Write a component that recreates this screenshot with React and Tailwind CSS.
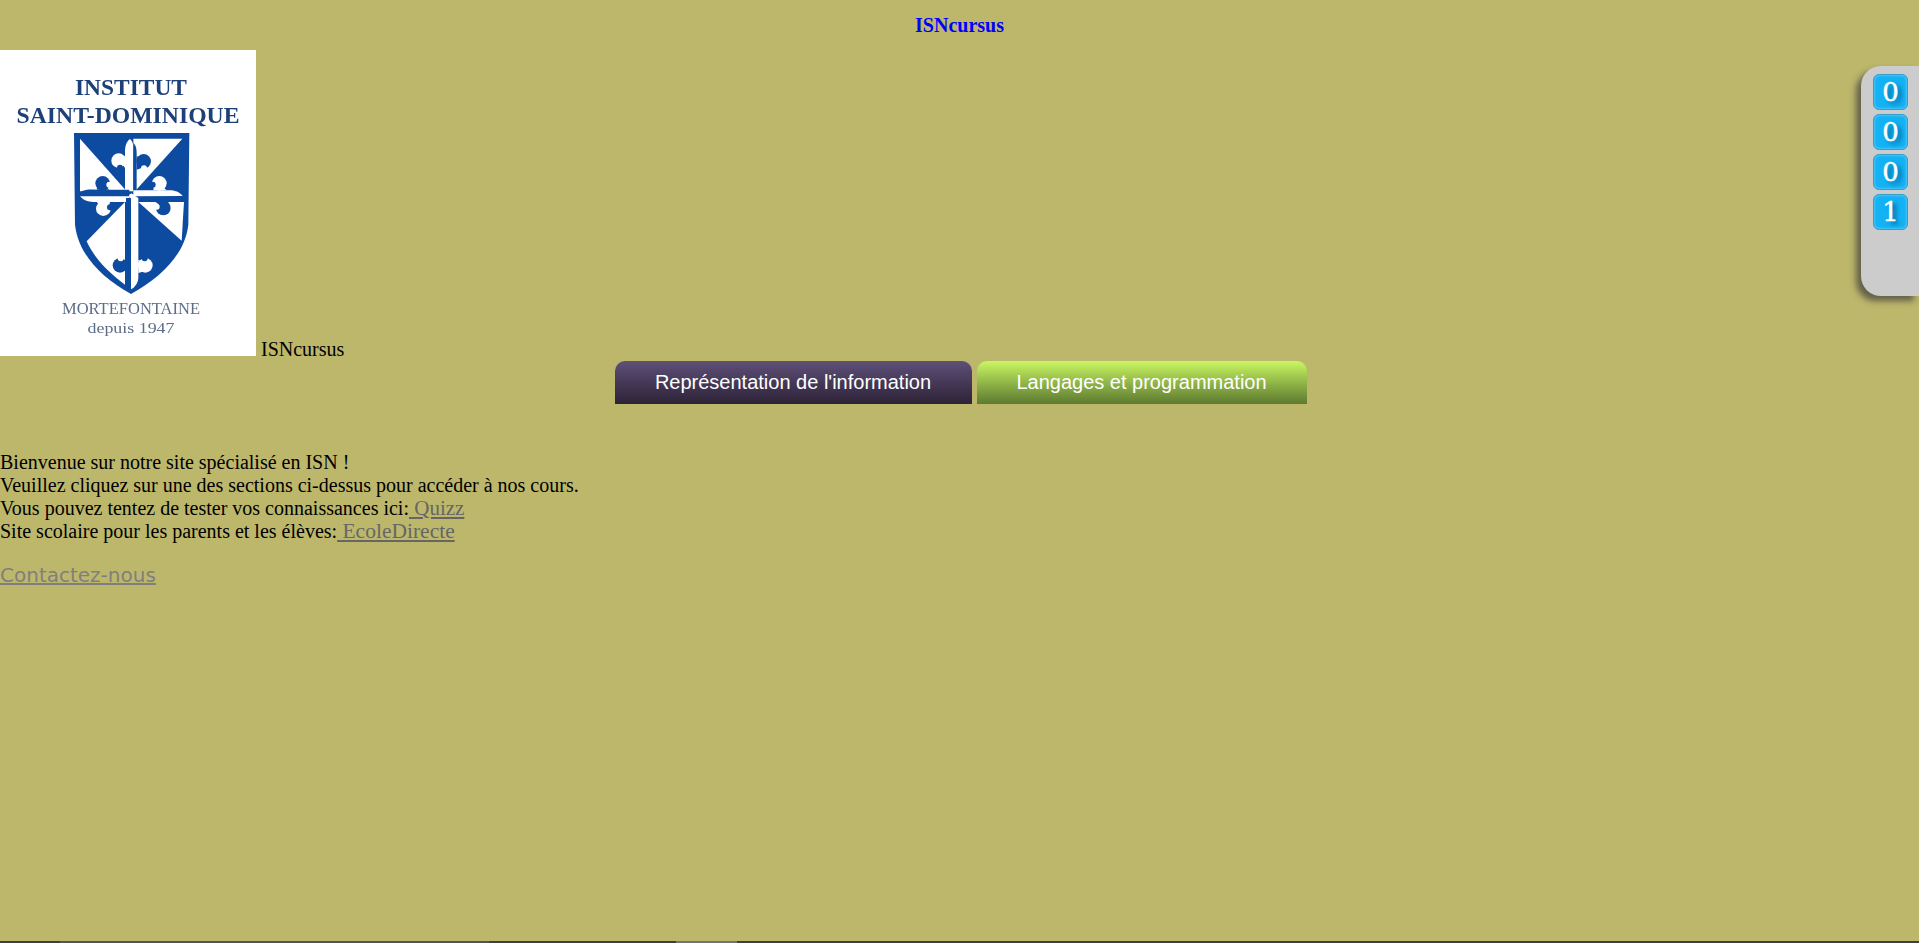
const serif = { fontFamily: '"Liberation Serif", serif' };

function Lobe({ cx, cy, color, notch, nx, ny, to }) {
  // round fleur lobe with a hook bitten out of its edge, joined to the cross by a tapered neck
  return (
    <g>
      <path d={`M${cx - 13} ${cy - 13} L${to[0]} ${to[1]} L${to[2]} ${to[3]} L${cx + 13} ${cy + 13} Z`} fill={color} />
      <circle cx={cx} cy={cy} r="22" fill={color} />
      <circle cx={nx} cy={ny} r="9" fill={notch} />
    </g>
  );
}

function Logo() {
  const blue = "#0f4ba0";
  const navy = "#1d3f78";
  const grey = "#5d6c88";
  const w = "#fff";
  return (
    <svg width="256" height="306" viewBox="0 0 256 306" className="inline-block bg-white align-baseline">
      <defs>
        <filter id="soft" x="-5%" y="-5%" width="110%" height="110%">
          <feGaussianBlur stdDeviation="0.5" />
        </filter>
        <clipPath id="shieldClip">
          <path d="M12 15 L358 15 L355 290 C345 380 270 450 183 498 C96 450 25 380 15 290 Z" />
        </clipPath>
      </defs>
      <g filter="url(#soft)" style={serif}>
        <text x="131" y="45" textAnchor="middle" fontSize="24" fontWeight="700" fill={navy} textLength="112" lengthAdjust="spacingAndGlyphs">INSTITUT</text>
        <text x="128" y="73" textAnchor="middle" fontSize="24" fontWeight="700" fill={navy} textLength="223" lengthAdjust="spacingAndGlyphs">SAINT-DOMINIQUE</text>
        <text x="131" y="264" textAnchor="middle" fontSize="17" fill={grey} textLength="138" lengthAdjust="spacingAndGlyphs">MORTEFONTAINE</text>
        <text x="131" y="283" textAnchor="middle" fontSize="15" fill={grey} textLength="87" lengthAdjust="spacingAndGlyphs">depuis 1947</text>
        <g transform="translate(70,78) scale(0.3333)">
          <path d="M12 15 L358 15 L355 290 C345 380 270 450 183 498 C96 450 25 380 15 290 Z" fill={blue} />
          <g clipPath="url(#shieldClip)">
            {/* white fields */}
            <path d="M30 32 L170 190 L30 190 Z" fill={w} />
            <path d="M190 32 L337 32 L195 190 Z" fill={w} />
            <path d="M205 222 L342 222 L335 338 Z" fill={w} />
            <path d="M165 222 L165 470 C110 430 70 385 50 340 Z" fill={w} />

            {/* top fleur */}
            <path d="M165 190 L165 70 C165 50 172 38 180 33 C186 38 190 46 190 56 L190 190 Z" fill={w} />
            <path d="M190 44 C198 52 200 62 200 76 L200 190 L190 190 Z" fill={blue} />
            <Lobe cx={146} cy={98} color={w} notch={blue} nx={150} ny={119} to={[165, 85, 165, 120]} />
            <Lobe cx={221} cy={100} color={blue} notch={w} nx={222} ny={121} to={[200, 85, 200, 125]} />

            {/* left fleur */}
            <path d="M32 192 C44 184 60 184 80 185 L178 185 L178 203 L30 203 Z" fill={blue} />
            <path d="M30 205 L178 205 L178 222 L70 222 C52 222 40 216 30 205 Z" fill={w} />
            <Lobe cx={98} cy={166} color={blue} notch={w} nx={118} ny={170} to={[80, 185, 118, 185]} />
            <Lobe cx={100} cy={242} color={w} notch={blue} nx={120} ny={238} to={[80, 222, 120, 222]} />

            {/* right fleur */}
            <path d="M190 187 L300 187 C318 187 330 194 338 204 L190 205 Z" fill={w} />
            <path d="M200 208 L342 208 C334 218 320 222 300 222 L200 222 Z" fill={blue} />
            <Lobe cx={268} cy={166} color={w} notch={blue} nx={248} ny={170} to={[250, 187, 290, 187]} />
            <Lobe cx={280} cy={240} color={blue} notch={w} nx={260} ny={236} to={[255, 222, 295, 222]} />

            {/* lower stem */}
            <path d="M168 210 L183 210 L183 484 L168 470 Z" fill={blue} />
            <path d="M183 196 L205 210 L205 450 C205 462 198 472 190 480 L183 484 Z" fill={w} />
            <Lobe cx={150} cy={412} color={blue} notch={w} nx={152} ny={391} to={[168, 395, 168, 435]} />
            <Lobe cx={226} cy={412} color={w} notch={blue} nx={224} ny={391} to={[205, 395, 205, 435]} />
            <circle cx="184" cy="204" r="7" fill={w} />
          </g>
        </g>
      </g>
    </svg>
  );
}

function Digit({ d }) {
  return (
    <div className="flex h-[36px] w-[35px] items-center justify-center rounded-[6px] border border-[#3a9cc8] bg-[#12b2f4] shadow-[inset_0_0_3px_rgba(255,255,255,0.5)]">
      <span
        className="text-[26px] leading-none text-white [-webkit-text-stroke:0.5px_white] [text-shadow:4px_3px_4px_rgba(0,60,110,0.7)]"
        style={{ fontFamily: '"DejaVu Serif", serif' }}
      >
        {d}
      </span>
    </div>
  );
}

export default function App() {
  return (
    <div className="relative h-[943px] overflow-hidden bg-[#bdb76b] text-[20px] text-black" style={serif}>
      <div className="pt-[14px] pb-[14px] text-center leading-[22px] font-bold text-[#0000ff]">ISNcursus</div>

      <div className="leading-[21px]">
        <Logo /> ISNcursus
      </div>

      <div className="mt-[1px] flex justify-center gap-[5px] pl-[2px] text-white" style={{ fontFamily: '"Liberation Sans", sans-serif' }}>
        <div className="flex h-[43px] w-[357px] items-center justify-center rounded-t-[10px] bg-gradient-to-b from-[#5f5079] to-[#2d2337] pb-[1px]">Représentation de l'information</div>
        <div className="flex h-[43px] w-[330px] items-center justify-center rounded-t-[10px] bg-gradient-to-b from-[#c9f862] to-[#5e7a30] pb-[1px]">Langages et programmation</div>
      </div>

      <div className="mt-[47px] leading-[23px]">
        <div>Bienvenue sur notre site spécialisé en ISN !</div>
        <div>Veuillez cliquez sur une des sections ci-dessus pour accéder à nos cours.</div>
        <div>Vous pouvez tentez de tester vos connaissances ici:<a className="text-[21px] text-[#666666] underline" href="#"> Quizz</a></div>
        <div>Site scolaire pour les parents et les élèves:<a className="text-[21.5px] text-[#666666] underline" href="#"> EcoleDirecte</a></div>
      </div>

      <a
        className="mt-[21px] block w-fit leading-[23px] text-[#7f7f7f] underline"
        style={{ fontFamily: '"DejaVu Sans", sans-serif' }}
        href="#"
      >
        Contactez-nous
      </a>

      <div className="absolute top-[66px] right-0 flex h-[230px] w-[58px] flex-col gap-[4px] rounded-l-[20px] bg-[#cccccc] pt-[8px] pl-[12px] shadow-[-5px_5px_6px_rgba(60,60,60,0.7)]">
        <Digit d="0" />
        <Digit d="0" />
        <Digit d="0" />
        <Digit d="1" />
      </div>

      <div className="absolute right-0 bottom-0 left-0 flex h-[2px] bg-[#3c4043]">
        <div className="w-[60px]" />
        <div className="w-[429px] bg-[#555555]" />
        <div className="w-[187px]" />
        <div className="w-[61px] bg-[#70757a]" />
      </div>
    </div>
  );
}
